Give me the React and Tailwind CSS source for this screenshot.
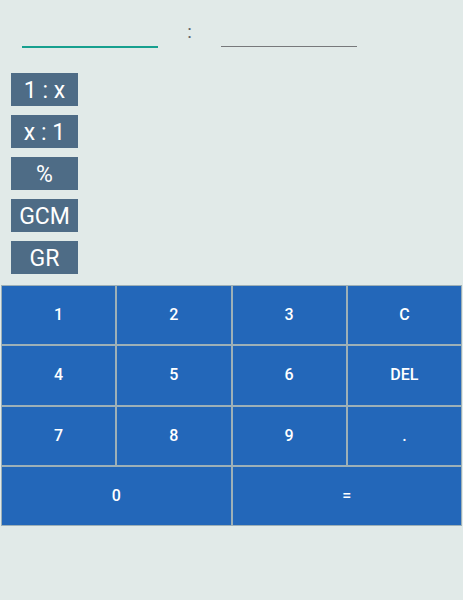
import React from 'react';

const KEYS = [
  { label: '1' }, { label: '2' }, { label: '3' }, { label: 'C' },
  { label: '4' }, { label: '5' }, { label: '6' }, { label: 'DEL' },
  { label: '7' }, { label: '8' }, { label: '9' }, { label: '.' },
  { label: '0', wide: true }, { label: '=', wide: true },
];

const OPS = ['1 : x', 'x : 1', '%', 'GCM', 'GR'];

export default function App() {
  return (
    <div className="min-h-[600px] w-full bg-[#e1eae8] font-['Roboto',sans-serif]">
      {/* ratio inputs */}
      <div className="flex items-end pt-[18px]">
        <div className="ml-[22px] h-[30px] w-[136px] border-b-2 border-[#17a08f]"></div>
        <div className="w-[63px] pb-[7px] text-center text-[19px] leading-none text-[#5f6468]">:</div>
        <div className="mb-[1px] h-[29px] w-[136px] border-b border-[#77797b]"></div>
      </div>

      {/* operations */}
      <div className="mt-[25px] flex flex-col gap-[9px] pl-[11px]">
        {OPS.map((op) => (
          <button
            key={op}
            className="flex h-[33px] w-[67px] items-center justify-center bg-[#4e6c86] pt-[2px] text-[23px] leading-none text-white"
          >
            {op}
          </button>
        ))}
      </div>

      {/* keypad */}
      <div className="mx-[1px] mt-[11px] grid grid-cols-4">
        {KEYS.map((k) => (
          <button
            key={k.label}
            className={`flex h-[60.25px] items-center justify-center border border-[#9db0b7] bg-[#2367b9] text-[16px] font-medium text-white ${k.wide ? 'col-span-2' : ''}`}
          >
            {k.label}
          </button>
        ))}
      </div>
    </div>
  );
}
